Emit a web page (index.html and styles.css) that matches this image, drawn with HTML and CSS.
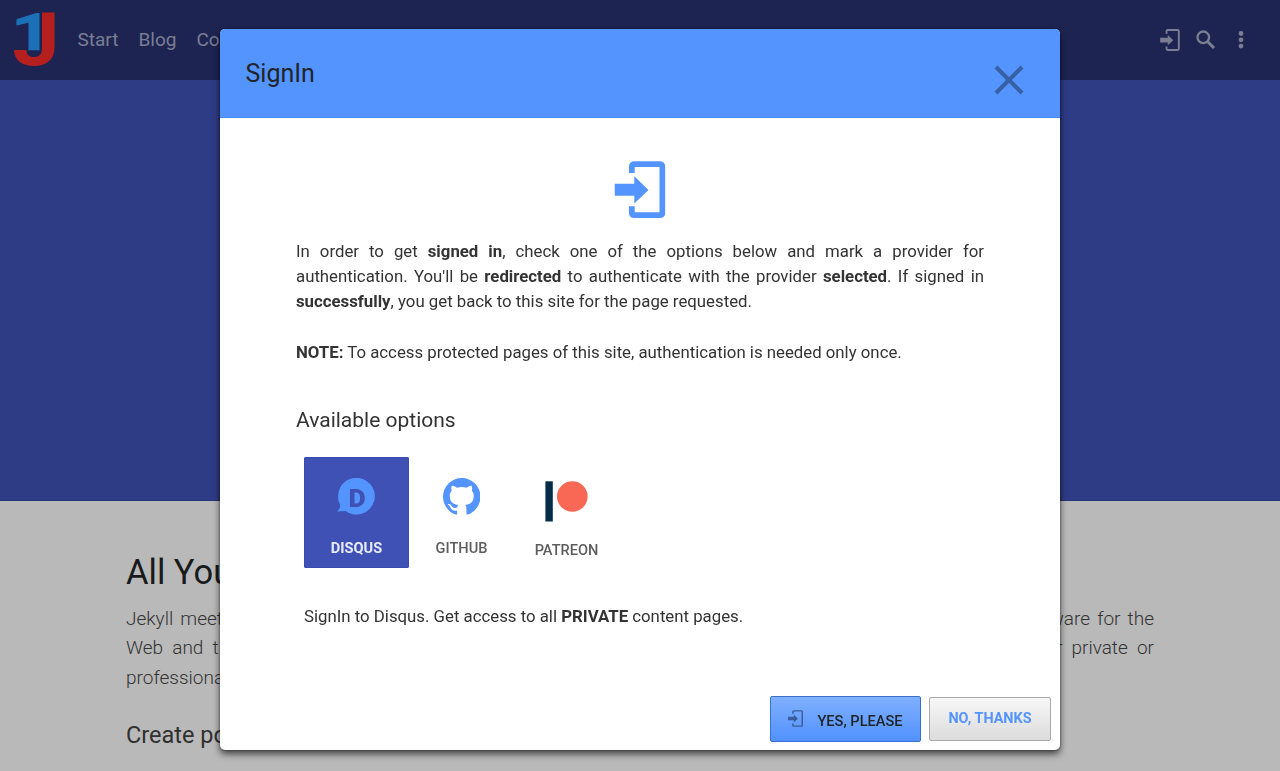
FILE: index.html
```html
<!DOCTYPE html>
<html lang="en">
<head>
<meta charset="utf-8">
<title>SignIn</title>
<link rel="stylesheet" href="styles.css">
</head>
<body>
<svg class="defs" width="0" height="0">
  <symbol id="login" viewBox="0 0 51 57">
    <path fill="none" stroke="currentColor" stroke-width="5.8" d="M17.3 12V6.2Q17.3 3.2 20.3 3.2H44.9Q47.9 3.2 47.9 6.2V51.2Q47.9 54.2 44.9 54.2H20.3Q17.3 54.2 17.3 51.2V45.3"/>
    <path fill="currentColor" d="M0 22.8H19.8V15.3L34 29L19.8 42.4V34.7H0Z"/>
  </symbol>
  <symbol id="login-thin" viewBox="0 0 51 57">
    <path fill="none" stroke="currentColor" stroke-width="5" d="M16.6 12V5.6Q16.6 2.6 19.6 2.6H45.4Q48.4 2.6 48.4 5.6V51.4Q48.4 54.4 45.4 54.4H19.6Q16.6 54.4 16.6 51.4V45.3"/>
    <path fill="currentColor" d="M0 22.8H19.8V15.3L34 29L19.8 42.4V34.7H0Z"/>
  </symbol>
</svg>
<header class="navbar">
  <svg class="logo" viewBox="0 0 42 55">
    <path fill="#b5201f" d="M28 .5H40.5V35.5C40.5 47 33 54 20 54C7.500 54 0 47.500 0 38H12.500C12.500 42.500 15 45 20 45C25.500 45 28 42 28 36Z"/>
    <path fill="#1b70b8" d="M25.500 1V38.300H14.500V10.800L2.400 13.500V7.300L22 1Z"/>
  </svg>
  <nav class="menu"><span>Start</span><span>Blog</span><span>Contact</span></nav>
  <div class="tools">
    <svg class="tool-login"><use href="#login-thin"/></svg>
    <svg class="tool-search" viewBox="0 0 20 20"><circle cx="7.300" cy="7.300" r="5.800" fill="none" stroke="currentColor" stroke-width="2.300"/><path d="M11.500 11.500L18 18" stroke="currentColor" stroke-width="3"/></svg>
    <svg class="tool-more" viewBox="0 0 6 18"><circle cx="3" cy="2.500" r="2.400"/><circle cx="3" cy="8.800" r="2.400"/><circle cx="3" cy="15.100" r="2.400"/></svg>
  </div>
</header>
<div class="hero"></div>
<main class="page">
  <h1>All You Need</h1>
  <div class="lead">
    <div class="lead-row"><span>Jekyll meets Bootstrap.</span><span>software for the</span></div>
    <div class="lead-row wide"><span>Web and the</span><span>for private or</span></div>
    <div class="lead-row"><span>professional use.</span></div>
  </div>
  <h2>Create powerful</h2>
</main>
<div class="overlay">
  <section class="modal">
    <div class="modal-head">
      <div class="title">SignIn</div>
      <svg class="close" viewBox="0 0 30 30"><path d="M2 2L28 28M28 2L2 28" fill="none" stroke="currentColor" stroke-width="4"/></svg>
    </div>
    <div class="modal-body">
      <svg class="big-login"><use href="#login"/></svg>
      <p class="intro">In order to get <b>signed in</b>, check one of the options below and mark a provider for authentication. You'll be <b>redirected</b> to authenticate with the provider <b>selected</b>. If signed in <b>successfully</b>, you get back to this site for the page requested.</p>
      <p class="note"><b>NOTE:</b> To access protected pages of this site, authentication is needed only once.</p>
      <h3>Available options</h3>
      <div class="tabs">
        <div class="tab active">
          <svg class="icon" viewBox="0 0 40 38"><path fill="currentColor" d="M0 33.600C2.500 31 3.600 29 3 26.500A18.400 18.400 0 1 1 8.500 33Q4 33 0 33.600Z"/><text x="11.500" y="28.500" class="mark">D</text></svg>
          <span>DISQUS</span>
        </div>
        <div class="tab">
          <svg class="icon" viewBox="2 2 20 20"><path fill="currentColor" d="M12,2A10,10 0 0,0 2,12C2,16.42 4.87,20.17 8.84,21.5C9.34,21.58 9.5,21.27 9.5,21C9.5,20.77 9.5,20.14 9.5,19.31C6.73,19.91 6.14,17.97 6.14,17.97C5.68,16.81 5.03,16.5 5.03,16.5C4.12,15.88 5.1,15.9 5.1,15.9C6.1,15.97 6.63,16.93 6.63,16.93C7.5,18.45 8.97,18 9.54,17.76C9.63,17.11 9.89,16.67 10.17,16.42C7.95,16.17 5.62,15.31 5.62,11.5C5.62,10.39 6,9.5 6.65,8.79C6.55,8.54 6.2,7.5 6.75,6.15C6.75,6.15 7.59,5.88 9.5,7.17C10.29,6.95 11.15,6.84 12,6.84C12.85,6.84 13.71,6.95 14.5,7.17C16.41,5.88 17.25,6.15 17.25,6.15C17.8,7.5 17.45,8.54 17.35,8.79C18,9.5 18.38,10.39 18.38,11.5C18.38,15.32 16.04,16.16 13.81,16.41C14.17,16.72 14.5,17.33 14.5,18.26C14.5,19.6 14.5,20.68 14.5,21C14.5,21.27 14.66,21.59 15.17,21.5C19.14,20.16 22,16.42 22,12A10,10 0 0,0 12,2Z"/></svg>
          <span>GITHUB</span>
        </div>
        <div class="tab patreon">
          <svg class="icon" viewBox="0 0 43 41"><path fill="#052d49" d="M.4.300H7.800V40.500H.4Z"/><circle cx="27.300" cy="15.500" r="15.300" fill="#f96854"/></svg>
          <span>PATREON</span>
        </div>
      </div>
      <p class="hint">SignIn to Disqus. Get access to all <b>PRIVATE</b> content pages.</p>
    </div>
    <footer class="actions">
      <button class="btn yes"><svg><use href="#login-thin"/></svg><span>YES, PLEASE</span></button>
      <button class="btn no">NO, THANKS</button>
    </footer>
  </section>
</div>
</body>
</html>
```

FILE: styles.css
```css
* { box-sizing: border-box; }
body { margin: 0; height: 771px; overflow: hidden; background: #b9b9b9; font-family: Roboto, sans-serif; color: #212529; }
h1, h2, h3, p { margin: 0; }
svg { display: block; flex: none; }
.defs { position: absolute; }

.navbar { display: flex; align-items: center; height: 80px; padding: 0 36px 1px 14px; background: #1d2452; color: #7b7e92; }
.logo { width: 42px; height: 55px; }
.menu { display: flex; gap: 20px; margin: 1px 0 0 21.500px; font-size: 19px; line-height: 24px; }
.tools { display: flex; align-items: center; margin: 1px 0 0 auto; }
.tool-login { width: 20px; height: 22px; }
.tool-search { width: 20px; height: 20px; margin-left: 16px; }
.tool-more { width: 6px; height: 18px; margin-left: 22px; fill: currentColor; }

.hero { height: 421px; background: #2e3b85; border-bottom: 1px solid #27347d; }
.page { padding: 51px 126px 0; }
.page h1 { font-size: 34.500px; font-weight: 400; line-height: 41px; color: #17191b; }
.lead { margin-top: 11px; font-size: 19px; font-weight: 300; line-height: 29.300px; color: #333; }
.lead-row { display: flex; justify-content: space-between; word-spacing: 2.500px; }
.lead-row.wide { word-spacing: 4.500px; }
.page h2 { margin-top: 28px; font-size: 23.500px; font-weight: 400; line-height: 30px; color: #303030; }

.overlay { position: fixed; inset: 0; display: flex; justify-content: center; align-items: flex-start; padding-top: 29px; }
.modal { display: flex; flex-direction: column; width: 840px; height: 721px; border-radius: 5px; background: #fff; overflow: hidden; box-shadow: 0 4px 7px rgba(0,0,0,.65), 0 0 2px rgba(0,0,0,.5); }
.modal-head { display: flex; justify-content: space-between; height: 88.500px; padding: 29px 36px 0 25.500px; background: #5494ff; border-bottom: 1px solid #4589f8; }
.title { font-size: 25px; line-height: 32px; }
.close { width: 30px; height: 30px; margin-top: 6.500px; color: #3761a6; }
.modal-body { flex: 1; padding: 43.500px 76px 0; color: #333; font-size: 16.800px; line-height: 25.200px; }
.modal-body b { font-weight: 700; }
.big-login { width: 51px; height: 57px; margin: 0 auto; color: #5494ff; transform: translateX(-.5px); }
.intro { margin-top: 21px; text-align: justify; }
.note { margin-top: 25px; }
.modal-body h3 { margin-top: 42px; font-size: 21px; line-height: 26px; font-weight: 400; }
.tabs { display: flex; margin: 24.400px 0 0 8px; }
.tab { display: flex; flex-direction: column; align-items: center; width: 105px; height: 111px; padding-top: 21px; border-radius: 2px; color: #5494ff; font-size: 14.600px; font-weight: 500; line-height: 20px; }
.tab span { margin-top: 22.500px; color: #5d5d5d; }
.icon { width: 37.500px; height: 37.500px; }
.tab.active { background: #3f51b5; box-shadow: inset 0 0 0 1px #394bb0; }
.tab.active .icon { width: 40px; height: 38px; }
.tab.active span { color: #e9ebf7; font-weight: 700; margin-top: 22px; }
.mark { font-size: 26.500px; font-weight: 900; fill: #3f51b5; }
.patreon { padding-top: 23.500px; }
.patreon .icon { width: 43px; height: 41px; }
.patreon span { margin-top: 18px; }
.hint { margin: 35.600px 0 0 8px; }

.actions { display: flex; justify-content: flex-end; align-items: center; gap: 8px; height: 62px; padding: 0 9px 0 8px; }
.btn { display: flex; align-items: center; justify-content: center; padding: 0; font: 500 14.600px/20px Roboto, sans-serif; border-radius: 2px; }
.yes { width: 151px; height: 46px; border: 1px solid #3b6fcb; background: linear-gradient(#7fb0ff, #5191ff); color: #212529; }
.yes svg { width: 15px; height: 17px; margin: -1px 14px 0 0; color: #3a5e9b; }
.yes span { margin-top: 3px; }
.no { width: 122px; height: 44px; border: 1px solid #aaa; background: linear-gradient(#f7f7f7, #dcdcdc); color: #5494ff; font-weight: 700; font-size: 14.400px; }
```
